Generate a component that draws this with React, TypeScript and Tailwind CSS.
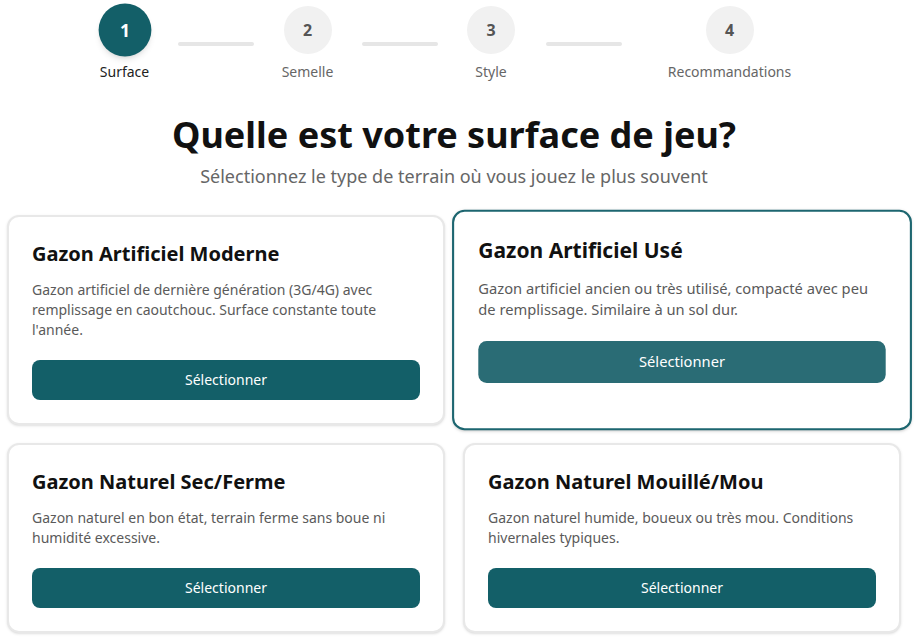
import React from 'react';

const TEAL = 'bg-[#135f68]';

interface Step {
  n: number;
  label: string;
  width: string;
}

const STEPS: Step[] = [
  { n: 1, label: 'Surface', width: 'w-[49px]' },
  { n: 2, label: 'Semelle', width: 'w-[51px]' },
  { n: 3, label: 'Style', width: 'w-[48px]' },
  { n: 4, label: 'Recommandations', width: 'w-[123px]' },
];

const LINE_MARGINS = ['ml-[29px] mr-[28px]', 'ml-[29px] mr-[29px]', 'ml-[31px] mr-[46px]'];

interface Surface {
  id: string;
  title: string;
  description: string;
  selected?: boolean;
}

const SURFACES: Surface[] = [
  {
    id: 'ag-moderne',
    title: 'Gazon Artificiel Moderne',
    description:
      "Gazon artificiel de dernière génération (3G/4G) avec remplissage en caoutchouc. Surface constante toute l'année.",
  },
  {
    id: 'ag-use',
    title: 'Gazon Artificiel Usé',
    description: 'Gazon artificiel ancien ou très utilisé, compacté avec peu de remplissage. Similaire à un sol dur.',
    selected: true,
  },
  {
    id: 'gn-sec',
    title: 'Gazon Naturel Sec/Ferme',
    description: 'Gazon naturel en bon état, terrain ferme sans boue ni humidité excessive.',
  },
  {
    id: 'gn-mou',
    title: 'Gazon Naturel Mouillé/Mou',
    description: 'Gazon naturel humide, boueux ou très mou. Conditions hivernales typiques.',
  },
];

function Stepper() {
  return (
    <div className="flex items-center pl-[100px] pt-[6px]">
      {STEPS.map((step, i) => {
        const active = step.n === 1;
        return (
          <React.Fragment key={step.n}>
            <div className={`flex flex-col items-center ${step.width}`}>
              <div
                className={
                  active
                    ? `w-12 h-12 rounded-full ${TEAL} text-white font-bold text-base flex items-center justify-center scale-110 shadow-md`
                    : 'w-12 h-12 rounded-full bg-[#f1f1f1] text-[#555] font-bold text-base flex items-center justify-center'
                }
              >
                {step.n}
              </div>
              <span className={`mt-2 text-sm leading-5 whitespace-nowrap ${active ? 'text-[#222]' : 'text-[#666]'}`}>
                {step.label}
              </span>
            </div>
            {i < STEPS.length - 1 && (
              <div className={`w-[76px] h-1 rounded-full bg-[#e6e6e6] ${LINE_MARGINS[i]}`} />
            )}
          </React.Fragment>
        );
      })}
    </div>
  );
}

function SurfaceCard({ surface }: { surface: Surface }) {
  return (
    <div
      className={
        surface.selected
          ? 'bg-white rounded-xl border-2 border-[#1d6670] p-[23px] scale-105 shadow-sm'
          : 'bg-white rounded-xl border-2 border-[#e8e8e8] p-[23px] shadow-sm'
      }
    >
      <h3 className="text-xl leading-7 font-bold text-[#111]">{surface.title}</h3>
      <p className="mt-3 text-sm leading-5 text-[#5a5a5a]">{surface.description}</p>
      <button
        className={`mt-5 w-full h-10 rounded-lg text-sm text-white ${
          surface.selected ? 'bg-[#2a6c75]' : TEAL
        }`}
      >
        Sélectionner
      </button>
    </div>
  );
}

export default function App() {
  return (
    <div className="min-h-screen bg-white overflow-hidden" style={{ fontFamily: '"Noto Sans", "Open Sans", sans-serif' }}>
      <Stepper />

      <div className="mt-[33px] text-center pr-[9px]">
        <h1 className="text-4xl leading-10 font-bold text-[#111]">Quelle est votre surface de jeu?</h1>
        <p className="mt-[7px] text-lg leading-7 text-[#666]">
          Sélectionnez le type de terrain où vous jouez le plus souvent
        </p>
      </div>

      <div className="mt-[25px] ml-[7px] grid grid-cols-[438px_438px] gap-[18px]">
        {SURFACES.map(s => (
          <SurfaceCard key={s.id} surface={s} />
        ))}
      </div>
    </div>
  );
}
